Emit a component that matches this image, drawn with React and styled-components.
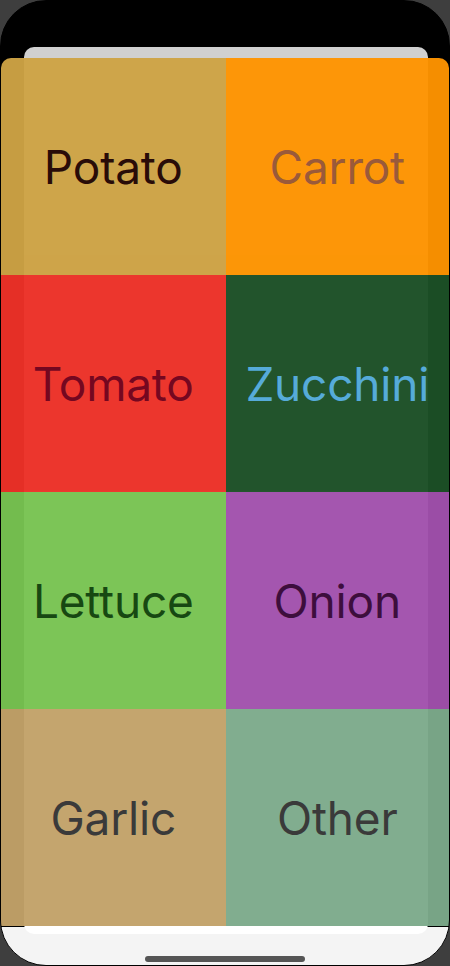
import React from 'react';
import styled, { createGlobalStyle } from 'styled-components';

const GlobalStyle = createGlobalStyle`
    html, body {
        margin: 0;
        padding: 0;
        background: #3e3e3e;
    }
    body {
        font-family: Inter, "Noto Sans", sans-serif;
    }
`;

const Page = styled.div`
    width: 450px;
    height: 966px;
    overflow: hidden;
    background-color: #3e3e3e;
`;

const Screen = styled.div`
    width: 450px;
    height: 966px;
    box-sizing: border-box;
    border: 1.5px solid #000;
    border-radius: 46px;
    overflow: hidden;
    display: flex;
    flex-direction: column;
    background: linear-gradient(to bottom, #000 0 926px, #f4f4f4 926px);
`;

const Stack = styled.div`
    display: grid;
    grid-template-areas: 'stack';
    padding-top: 46px;
`;

const BackCard = styled.div`
    grid-area: stack;
    margin: 0 21px 0 23px;
    height: 887px;
    border-radius: 10px;
    background: linear-gradient(to bottom, #d0d0d0 0 50%, #ffffff 50%);
`;

const Sheet = styled.div`
    grid-area: stack;
    margin: 11px 0 0 0;
    height: 868px;
    border-radius: 10px 10px 0 0;
    overflow: hidden;
    opacity: 0.965;
    display: grid;
    grid-template-columns: 224.5px 1fr;
    grid-template-rows: repeat(4, 1fr);
`;

const Cell = styled.div`
    display: flex;
    align-items: center;
    justify-content: center;
    background: ${({ $bg }) => $bg};
    color: ${({ $fg }) => $fg};
    font-size: 46px;
    letter-spacing: -0.2px;
    white-space: nowrap;
`;

const HomeArea = styled.div`
    flex: 1;
    display: flex;
    align-items: flex-end;
    justify-content: center;
    padding-bottom: 3px;
`;

const HomeIndicator = styled.div`
    width: 160px;
    height: 6px;
    border-radius: 3px;
    background: #555;
`;

const veggies = [
    { name: 'Potato', bg: '#cea345', fg: '#230501' },
    { name: 'Carrot', bg: '#fe9400', fg: '#985634' },
    { name: 'Tomato', bg: '#ee3128', fg: '#72001a' },
    { name: 'Zucchini', bg: '#1c5027', fg: '#52aada' },
    { name: 'Lettuce', bg: '#78c351', fg: '#0f420a' },
    { name: 'Onion', bg: '#a150ad', fg: '#360636' },
    { name: 'Garlic', bg: '#c2a269', fg: '#333333' },
    { name: 'Other', bg: '#7dab8b', fg: '#333333' },
];

function App() {
    return (
        <Page>
            <GlobalStyle />
            <Screen>
                <Stack>
                    <BackCard />
                    <Sheet>
                        {veggies.map((v) => (
                            <Cell key={v.name} $bg={v.bg} $fg={v.fg}>
                                {v.name}
                            </Cell>
                        ))}
                    </Sheet>
                </Stack>
                <HomeArea>
                    <HomeIndicator />
                </HomeArea>
            </Screen>
        </Page>
    );
}

export default App;
